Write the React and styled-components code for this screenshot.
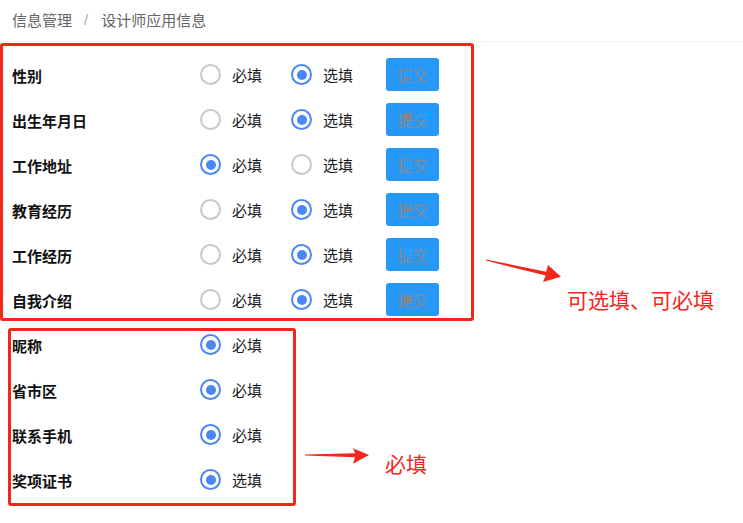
import React from "react";
import styled, { createGlobalStyle } from "styled-components";

const GlobalStyle = createGlobalStyle`
  html, body {
    margin: 0;
    padding: 0;
    background: #fff;
  }
  body {
    font-family: "Noto Sans CJK SC", "Noto Sans", sans-serif;
    color: #1f1f1f;
  }
`;

const RED = "#f3261c";

const optionalFields = [
  { label: "性别", value: "optional" },
  { label: "出生年月日", value: "optional" },
  { label: "工作地址", value: "required" },
  { label: "教育经历", value: "optional" },
  { label: "工作经历", value: "optional" },
  { label: "自我介绍", value: "optional" },
];

const fixedFields = [
  { label: "昵称", text: "必填" },
  { label: "省市区", text: "必填" },
  { label: "联系手机", text: "必填" },
  { label: "奖项证书", text: "选填" },
];

const Radio = ({ checked, children, width }) => (
  <RadioItem $width={width}>
    <Circle $checked={checked} />
    <span>{children}</span>
  </RadioItem>
);

const App = () => {
  return (
    <Page>
      <GlobalStyle />
      <Breadcrumb>
        <span>信息管理</span>
        <Sep>/</Sep>
        <span>设计师应用信息</span>
      </Breadcrumb>

      <Section>
        <MarkBox $width={474} $padLeft={9} $padTop={6} $bottom={-4}>
          {optionalFields.map((f) => (
            <Row key={f.label}>
              <Label>{f.label}</Label>
              <Radio width={91} checked={f.value === "required"}>必填</Radio>
              <Radio width={95} checked={f.value === "optional"}>选填</Radio>
              <Submit>提交</Submit>
            </Row>
          ))}
        </MarkBox>
        <Note $arrowTop={212} $textTop={243} $gap={11}>
          <svg width="80" height="30" viewBox="0 0 80 30">
            <polygon
              points="1,4.4 61.2,16.8 63,10 76,21.7 58,27 60.6,20.6 1,5.6"
              fill={RED}
            />
          </svg>
          <NoteText>可选填、可必填</NoteText>
        </Note>
      </Section>

      <Section $top={7}>
        <MarkBox $width={288} $left={8} $padLeft={1} $padTop={-9} $bottom={1}>
          {fixedFields.map((f) => (
            <Row key={f.label}>
              <Label>{f.label}</Label>
              <Radio width={91} checked>{f.text}</Radio>
            </Row>
          ))}
        </MarkBox>
        <Note $arrowTop={116} $textTop={122} $gap={7}>
          <svg width="70" height="24" viewBox="0 0 70 24">
            <polygon
              points="2,10.6 52,9.2 50,4.3 66,11 50,19.8 52,13.2 2,11.4"
              fill={RED}
            />
          </svg>
          <NoteText $left={12}>必填</NoteText>
        </Note>
      </Section>
    </Page>
  );
};

const Page = styled.div`
  width: 743px;
  min-height: 523px;
`;

const Breadcrumb = styled.div`
  height: 42px;
  display: flex;
  align-items: center;
  padding: 0 0 2px 12px;
  box-sizing: border-box;
  border-bottom: 1px solid #f2f2f2;
  font-size: 15px;
  color: #666;
`;

const Sep = styled.span`
  margin: 0 13px 0 12px;
  color: #aaa;
  font-family: "Liberation Sans", sans-serif;
`;

const Section = styled.div`
  display: flex;
  align-items: flex-start;
  margin-top: ${(p) => p.$top || 1}px;
`;

const MarkBox = styled.div`
  flex: none;
  width: ${(p) => p.$width}px;
  margin-left: ${(p) => p.$left || 0}px;
  box-sizing: border-box;
  border: 3px solid ${RED};
  border-radius: 3px;
  padding: 0 0 ${(p) => Math.max(p.$bottom, 0)}px ${(p) => p.$padLeft}px;

  & > :first-child {
    margin-top: ${(p) => p.$padTop}px;
  }
  & > :last-child {
    margin-bottom: ${(p) => Math.min(p.$bottom, 0)}px;
  }
`;

const Row = styled.div`
  display: flex;
  align-items: center;
  height: 45px;
`;

const Label = styled.div`
  width: 188px;
  font-size: 15px;
  font-weight: 700;
  color: #111;
  padding-top: 1px;
`;

const RadioItem = styled.label`
  display: flex;
  align-items: center;
  width: ${(p) => p.$width}px;
  font-size: 15px;
  color: #1a1a1a;

  span {
    margin-left: 11px;
  }
`;

const Circle = styled.span`
  flex: none;
  position: relative;
  width: 21px;
  height: 21px;
  box-sizing: border-box;
  border-radius: 50%;
  border: 2px solid ${(p) => (p.$checked ? "#4a87f5" : "#c8c8c8")};
  background: #fff;
  margin-left: 0 !important;

  &::after {
    content: "";
    display: ${(p) => (p.$checked ? "block" : "none")};
    position: absolute;
    left: 50%;
    top: 50%;
    width: 10px;
    height: 10px;
    margin: -5px 0 0 -5px;
    border-radius: 50%;
    background: #4a87f5;
  }
`;

const Submit = styled.button`
  width: 53px;
  height: 33px;
  border: none;
  border-radius: 3px;
  background: #2699f8;
  color: #8a8a8a;
  font-family: inherit;
  font-size: 15px;
  padding: 0;
`;

const Note = styled.div`
  display: flex;
  align-items: flex-start;
  margin-left: ${(p) => p.$gap}px;

  svg {
    flex: none;
    margin-top: ${(p) => p.$arrowTop}px;
  }
  & > div {
    margin-top: ${(p) => p.$textTop}px;
  }
`;

const NoteText = styled.div`
  margin-left: ${(p) => p.$left || 2}px;
  font-size: 21px;
  line-height: 26px;
  color: ${RED};
  white-space: nowrap;
`;

export default App;
